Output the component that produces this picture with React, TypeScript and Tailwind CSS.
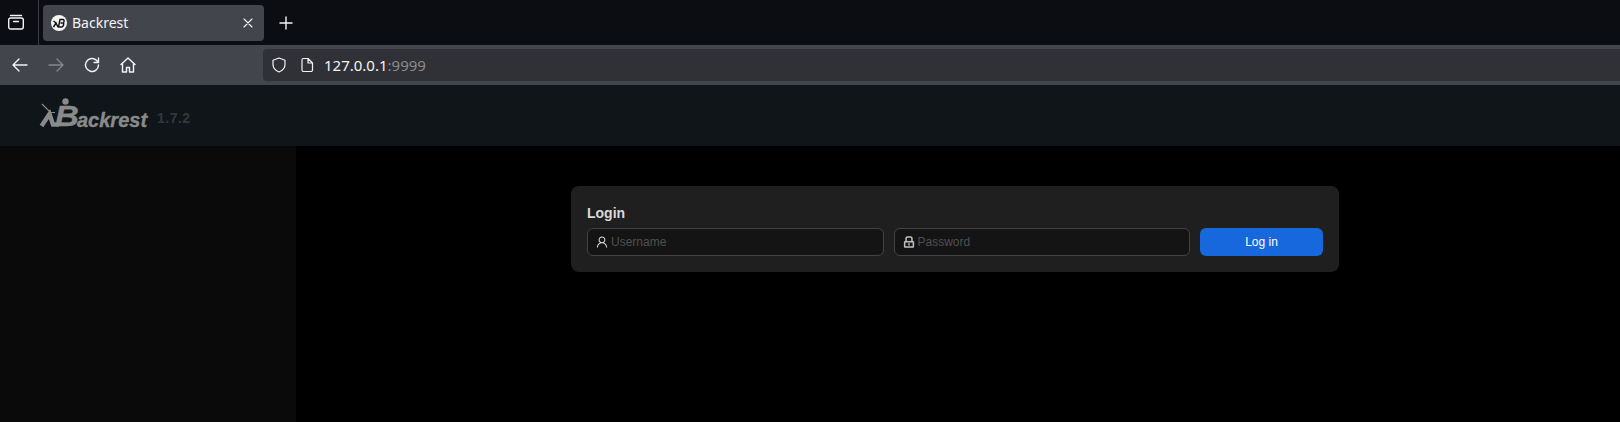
import React from 'react';
import { AiOutlineUser, AiOutlineLock } from 'react-icons/ai';

const stroke = { fill: 'none', stroke: 'currentColor', strokeWidth: 1.4, strokeLinecap: 'round', strokeLinejoin: 'round' } as const;

const TabsIcon = () => (
  <svg width="18" height="18" viewBox="0 0 18 18" {...stroke} className="text-[#f4f4f6]">
    <path d="M3.5 2.5h11" />
    <rect x="1.7" y="5" width="14.6" height="11" rx="2" />
    <path d="M6.5 8.5h5" />
  </svg>
);

const Favicon = () => (
  <svg width="16" height="16" viewBox="0 0 16 16" className="shrink-0">
    <circle cx="8" cy="8" r="8" fill="#f5f5f5" />
    <path d="M2.5 6 L5 8 M2.5 12 L5 8 L7 12" fill="none" stroke="#111" strokeWidth="1.5" />
    <path d="M7.5 12 L9 4.5 H12.2 Q13.8 5.2 12.6 7.6 Q13.2 10.5 11 12 Z M9.5 8 H11.8" fill="none" stroke="#111" strokeWidth="1.4" />
  </svg>
);

const NavIcon = ({ children, dim }: { children: React.ReactNode; dim?: boolean }) => (
  <svg width="18" height="18" viewBox="0 0 18 18" {...stroke} className={dim ? 'text-[#85878c]' : 'text-[#f4f4f6]'}>
    {children}
  </svg>
);

const Logo = () => (
  <div className="relative w-[108px] h-[37px] text-[#8a8a8a] font-['Liberation_Sans',sans-serif] font-bold italic">
    <svg width="44" height="37" viewBox="0 0 44 37" className="absolute left-0 top-0">
      <circle cx="26.5" cy="4.5" r="3.2" fill="#8a8a8a" />
      <path d="M3 7 L11.5 15.5 H16" fill="none" stroke="#8a8a8a" strokeWidth="1.2" />
      <path d="M2.5 29 L10.5 17 L14 27.5 H20" fill="none" stroke="#8a8a8a" strokeWidth="4.4" />
    </svg>
    <span className="absolute left-[16px] top-[3px] origin-left scale-x-110 text-[30px] leading-[32px] [-webkit-text-stroke:0.4px_#8a8a8a]">
      B
    </span>
    <span className="absolute left-[38px] top-[11px] text-[20px] leading-[24px] whitespace-nowrap [-webkit-text-stroke:0.4px_#8a8a8a]">
      ackrest
    </span>
  </div>
);

export default function App() {
  return (
    <div className="w-[1620px] h-[422px] overflow-hidden bg-black flex flex-col font-['Liberation_Sans',sans-serif]">
      {/* tab strip */}
      <div className="h-[45px] bg-[#0c0d12] flex items-center shrink-0">
        <div className="w-[39px] h-full flex items-center justify-center pr-[6px] pb-[1px] border-r border-[#3a3b40]">
          <TabsIcon />
        </div>
        <div className="ml-[4px] w-[221px] h-[36px] rounded-[4px] bg-[#42454c] flex items-center pl-[8px] pr-[10px] text-[#f4f4f6] font-['Noto_Sans',sans-serif] text-[14px]">
          <Favicon />
          <span className="ml-[5px] flex-1">Backrest</span>
          <svg width="12" height="12" viewBox="0 0 12 12" {...stroke} strokeWidth={1.1}>
            <path d="M2 2l8 8M10 2l-8 8" />
          </svg>
        </div>
        <svg width="14" height="14" viewBox="0 0 14 14" {...stroke} className="ml-[15px] text-[#f4f4f6]">
          <path d="M7 1v12M1 7h12" />
        </svg>
      </div>

      {/* nav bar */}
      <div className="h-[40px] bg-[#42454c] flex items-center shrink-0">
        <div className="w-[263px] flex items-center pl-[11px] gap-[18px]">
          <NavIcon>
            <path d="M16 9H2M8 3L2 9l6 6" />
          </NavIcon>
          <NavIcon dim>
            <path d="M2 9h14M10 3l6 6-6 6" />
          </NavIcon>
          <NavIcon>
            <path d="M15.5 9a6.5 6.5 0 1 1-2-4.7L15.5 6.5M15.5 2v4.5H11" />
          </NavIcon>
          <NavIcon>
            <path d="M2 8.5L9 2l7 6.5M3.5 7.5V16h4v-4.5h3V16h4V7.5" />
          </NavIcon>
        </div>
        <div className="flex-1 h-[32px] rounded-l-[4px] bg-[#2f3136] flex items-center pl-[8px] text-[#f4f4f6] font-['Noto_Sans',sans-serif] text-[15px]">
          <svg width="16" height="16" viewBox="0 0 16 16" {...stroke} strokeWidth={1.2}>
            <path d="M8 1l6 2.2v4.3c0 3.6-2.4 6-6 7.5-3.6-1.5-6-3.9-6-7.5V3.2z" />
          </svg>
          <svg width="14" height="16" viewBox="0 0 14 16" {...stroke} strokeWidth={1.2} className="ml-[13px]">
            <path d="M2 3a1.5 1.5 0 0 1 1.5-1.5H8L12.5 6v7a1.5 1.5 0 0 1-1.5 1.5H3.5A1.5 1.5 0 0 1 2 13zM8 1.5V6h4.5" />
          </svg>
          <span className="ml-[10px]">
            127.0.0.1<span className="text-[#8a8b8e]">:9999</span>
          </span>
        </div>
      </div>

      {/* app header */}
      <div className="h-[61px] bg-[#0f1519] flex items-start pl-[39px] pt-[12px] shrink-0">
        <Logo />
        <span className="ml-[10px] mt-[11px] text-[14px] font-bold tracking-[0.5px] text-[#33373b]">1.7.2</span>
      </div>

      <div className="flex-1 flex">
        <div className="w-[296px] bg-[#0a0a0a]" />
        <div className="flex-1">
          <div className="ml-[275px] mt-[40px] w-[768px] h-[86px] rounded-[8px] bg-[#1f1f1f] px-[16px] pt-[17px]">
            <div className="text-[14px] leading-[20px] font-bold text-[#d9d9d9]">Login</div>
            <div className="mt-[5px] flex gap-[10px]">
              <label className="flex-1 h-[28px] flex items-center rounded-[6px] border border-[#424242] bg-[#141414] pl-[7px] text-[#d9d9d9]">
                <AiOutlineUser className="w-[14px] h-[14px] shrink-0" />
                <input placeholder="Username" className="ml-[2px] flex-1 min-w-0 bg-transparent outline-none text-[12px] placeholder:text-[#505050]" />
              </label>
              <label className="flex-1 h-[28px] flex items-center rounded-[6px] border border-[#424242] bg-[#141414] pl-[7px] text-[#d9d9d9]">
                <AiOutlineLock className="w-[14px] h-[14px] shrink-0 stroke-current stroke-[25]" />
                <input placeholder="Password" className="ml-[2px] flex-1 min-w-0 bg-transparent outline-none text-[12px] placeholder:text-[#505050]" />
              </label>
              <button className="w-[123px] h-[28px] rounded-[6px] bg-[#1668dc] text-white text-[12px]">Log in</button>
            </div>
          </div>
        </div>
      </div>
    </div>
  );
}
